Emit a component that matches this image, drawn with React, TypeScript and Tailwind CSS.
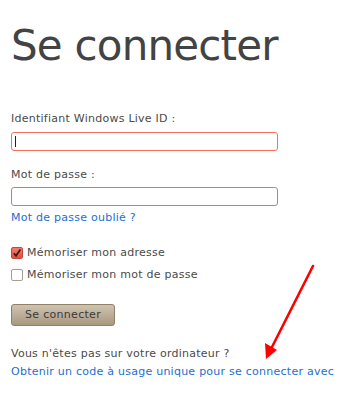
import { useState } from "react";

const Checkbox = ({ checked, label }: { checked: boolean; label: string }) => (
  <label className="flex items-center h-[14px] gap-[4px]">
    {checked ? (
      <span className="w-[12px] h-[12px] rounded-[2px] border border-[#c9463a] bg-gradient-to-b from-[#f57a6c] to-[#df4f40] flex items-center justify-center">
        <svg width="10" height="10" viewBox="0 0 10 10">
          <path d="M1.8 5.2 L4 7.8 L8.4 1.6" fill="none" stroke="#3a1a16" strokeWidth="1.7" />
        </svg>
      </span>
    ) : (
      <span className="w-[12px] h-[12px] rounded-[2px] border border-[#a59d90] bg-white"></span>
    )}
    <span>{label}</span>
  </label>
);

const App = () => {
  const [login, setLogin] = useState("");
  const [pwd, setPwd] = useState("");

  return (
    <div
      className="relative w-[358px] h-[409px] bg-white overflow-hidden px-[11px] text-[11px] leading-[14px] tracking-[0.25px] text-[#4a4a4a]"
      style={{ fontFamily: '"DejaVu Sans", Verdana, sans-serif' }}
    >
      <h1 className="pt-[22px] text-[42px] leading-[48px] text-[#434343] font-normal tracking-[-0.8px]">
        Se connecter
      </h1>

      <div className="mt-[42px]">Identifiant Windows Live ID :</div>
      <div className="relative mt-[6px] w-[267px]">
        <input
          value={login}
          onChange={(e) => setLogin(e.target.value)}
          className="block w-[267px] h-[19px] rounded-[3px] border border-[#f2705f] bg-white px-[4px] outline-none"
        />
        {/* caret of the focused field */}
        {login === "" && <span className="absolute left-[4px] top-[4px] w-[1px] h-[11px] bg-[#222]"></span>}
      </div>

      <div className="mt-[17px]">Mot de passe :</div>
      <input
        type="password"
        value={pwd}
        onChange={(e) => setPwd(e.target.value)}
        className="mt-[5px] block w-[267px] h-[19px] rounded-[3px] border border-[#9c927c] bg-white px-[4px] outline-none"
      />
      <a href="#" className="mt-[5px] block text-[#1b6fd1]">
        Mot de passe oublié ?
      </a>

      <div className="mt-[21px]">
        <Checkbox checked label="Mémoriser mon adresse" />
      </div>
      <div className="mt-[8px]">
        <Checkbox checked={false} label="Mémoriser mon mot de passe" />
      </div>

      <button className="mt-[22px] block w-[104px] h-[22px] rounded-[3px] border border-[#8f8068] bg-gradient-to-b from-[#cfc3b0] to-[#a89880] text-[#3b3b3b] text-[11px] tracking-[0.3px]">
        Se connecter
      </button>

      <div className="mt-[21px]">Vous n'êtes pas sur votre ordinateur ?</div>
      <a href="#" className="mt-[4px] block text-[#1b6fd1] whitespace-nowrap">
        Obtenir un code à usage unique pour se connecter avec
      </a>

      {/* red annotation arrow */}
      <svg className="absolute left-0 top-0 pointer-events-none" width="358" height="409">
        <line x1="313" y1="266" x2="271" y2="349" stroke="#ff0000" strokeWidth="2.6" strokeLinecap="round" />
        <polygon points="266,359 265,343 277,350" fill="#ff0000" />
      </svg>
    </div>
  );
};

export default App;
